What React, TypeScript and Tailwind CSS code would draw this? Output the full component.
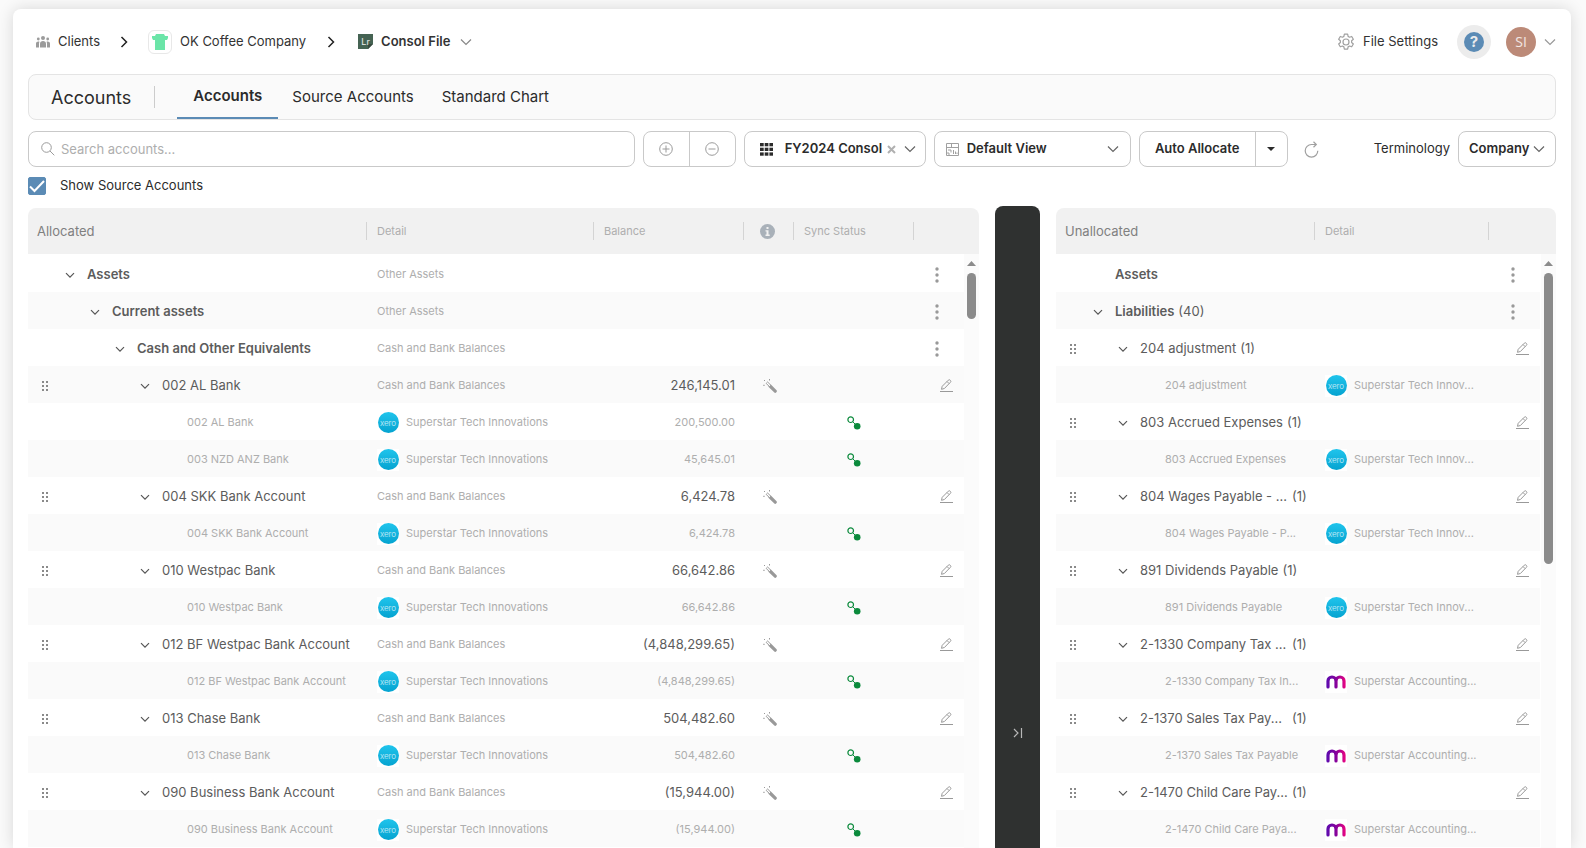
import { useState } from "react";
import type { ReactNode } from "react";

interface IconProps {
  className?: string;
}

function ChevronDown({ className = "" }: IconProps) {
  return (
    <svg viewBox="0 0 12 12" className={`h-3 w-3 shrink-0 ${className}`} fill="none" stroke="currentColor" strokeWidth="1.2">
      <path d="M1 3.5l5 5 5-5" />
    </svg>
  );
}

function RowChevron() {
  return (
    <svg viewBox="0 0 10 10" className="h-[10px] w-[10px]" fill="none" stroke="#555" strokeWidth="1.2">
      <path d="M1 3.2l4 4 4-4" />
    </svg>
  );
}

function BreadcrumbArrow() {
  return (
    <svg viewBox="0 0 8 12" className="h-3 w-2 shrink-0" fill="none" stroke="#222" strokeWidth="1.5">
      <path d="M1.5 1l5 5-5 5" />
    </svg>
  );
}

function ClientsIcon() {
  return (
    <svg viewBox="0 0 14 12" className="h-3 w-[14px]" fill="#9b9b9b">
      <circle cx="7" cy="2" r="2" />
      <circle cx="2.3" cy="3" r="1.4" />
      <circle cx="11.7" cy="3" r="1.4" />
      <path d="M4 11.5V7.6C4 5.9 5.3 5 7 5s3 .9 3 2.6v3.9z" />
      <path d="M0 11.5V7.4c0-1.3 1-2 2.3-2 .5 0 .9.1 1.2.3-.4.6-.5 1.3-.5 2v3.8z" />
      <path d="M14 11.5V7.4c0-1.3-1-2-2.3-2-.5 0-.9.1-1.2.3.4.6.5 1.3.5 2v3.8z" />
    </svg>
  );
}

function ShirtIcon() {
  return (
    <svg viewBox="0 0 16 16" className="h-4 w-4" fill="#6be5a8">
      <path d="M4 0h8l1 2h3v2l-1 2h-2v10H3V6H1L0 4V2h3z" />
    </svg>
  );
}

function FileIcon() {
  return (
    <span className="relative flex h-[15px] w-[15px] items-center justify-center">
      <svg viewBox="0 0 15 15" className="absolute inset-0" fill="#456353">
        <path d="M0 0h15v10l-5 5H0z" />
        <path d="M10 15v-5h5z" fill="#36493f" />
      </svg>
      <span className="relative text-[9px] leading-none font-normal text-white/90">Lr</span>
    </span>
  );
}

function GearIcon() {
  return (
    <svg viewBox="0 0 24 24" className="h-[18px] w-[18px]" fill="none" stroke="#a0a0a0" strokeWidth="1.6" strokeLinejoin="round">
      <circle cx="12" cy="12" r="4" />
      <path d="M9.8 1.5h4.4l.6 3 1.9 1.1 2.9-1 2.2 3.8-2.3 2v2.2l2.3 2-2.2 3.8-2.9-1-1.9 1.1-.6 3H9.8l-.6-3-1.9-1.1-2.900 1-2.200-3.800 2.300-2v-2.200l-2.300-2 2.200-3.800 2.900 1 1.900-1.100z" />
    </svg>
  );
}

function SearchIcon() {
  return (
    <svg viewBox="0 0 14 14" className="h-[14px] w-[14px] shrink-0" fill="none" stroke="#9b9b9b" strokeWidth="1">
      <circle cx="5.5" cy="5.5" r="4.8" />
      <path d="M9 9l4.3 4.3" />
    </svg>
  );
}

function CircleIcon({ plus }: { plus?: boolean }) {
  return (
    <svg viewBox="0 0 14 14" className="h-[14px] w-[14px]" fill="none" stroke="#9b9b9b" strokeWidth="1">
      <circle cx="7" cy="7" r="6.3" />
      <path d={plus ? "M3.5 7h7M7 3.5v7" : "M3.5 7h7"} />
    </svg>
  );
}

function GridIcon() {
  return (
    <svg viewBox="0 0 13 13" className="h-[13px] w-[13px] shrink-0" fill="#2b2b2b">
      {[0, 4.7, 9.4].map((y) => [0, 4.7, 9.4].map((x) => <rect key={`${x}-${y}`} x={x} y={y} width="3.7" height="3.3" />))}
    </svg>
  );
}

function ViewIcon() {
  return (
    <svg viewBox="0 0 13 13" className="h-[13px] w-[13px] shrink-0" fill="none" stroke="#a0a0a0" strokeWidth="1">
      <path d="M.5.5h12v12H.5zM.5 4.5h12M5.500.5v4M2 7h3v2.500M2 9v2h2M7.500 7v4M9.500 8.500V11M11 9.500V11" />
    </svg>
  );
}

function RefreshIcon() {
  return (
    <svg viewBox="0 0 15 17" className="h-[17px] w-[15px]" fill="none" stroke="#a0a0a0" strokeWidth="1.2">
      <path d="M12 3.5H7.5a6.300 6.300 0 1 0 6.300 6.300" />
      <path d="M9.500.8l2.800 2.700-2.800 2.700" />
    </svg>
  );
}

function InfoIcon() {
  return (
    <svg viewBox="0 0 15 15" className="h-[15px] w-[15px]">
      <circle cx="7.5" cy="7.5" r="7.5" fill="#a9b1b9" />
      <path d="M6.5 3h2v2h-2zM5.500 6.200h3v4.300h1.200V12H5.500v-1.500h1V7.600h-1z" fill="#f1f1f1" />
    </svg>
  );
}

function DragHandle() {
  return (
    <svg viewBox="0 0 7 10" className="h-[10px] w-[7px]" fill="#8a8a8a">
      {[0, 4, 8].map((y) => [0, 4].map((x) => <rect key={`${x}-${y}`} x={x} y={y} width="2" height="2" />))}
    </svg>
  );
}

function KebabIcon() {
  return (
    <svg viewBox="0 0 4 16" className="h-4 w-1" fill="#999">
      <circle cx="2" cy="2" r="1.7" />
      <circle cx="2" cy="8" r="1.7" />
      <circle cx="2" cy="14" r="1.7" />
    </svg>
  );
}

function PencilIcon() {
  return (
    <svg viewBox="0 0 13 13" className="h-[13px] w-[13px]" fill="none" stroke="#999" strokeWidth="1" strokeLinejoin="round">
      <path d="M1.500 10.300l.7-3L8.300 1.200a1.300 1.300 0 0 1 1.900 0l.2.2a1.300 1.300 0 0 1 0 1.900L4.400 9.500z" />
      <path d="M7 2.500l2.100 2.100" />
      <path d="M0 12.500h13" />
    </svg>
  );
}

function WandIcon() {
  return (
    <svg viewBox="0 0 14 14" className="h-[14px] w-[14px]" fill="none" stroke="#999">
      <path d="M7 7l5.200 5.200" strokeWidth="3.200" strokeLinecap="round" />
      <path d="M3.200 4.400l1.400-1.400 3.200 3.200-1.400 1.400z" fill="#fff" strokeWidth="1" />
      <path d="M1 1l1 1M6.500 0v1.500M.2 6.300h1.500" strokeWidth="1" />
    </svg>
  );
}

function SyncIcon() {
  return (
    <svg viewBox="0 0 14 14" className="h-[14px] w-[14px]" fill="none" stroke="#0b8a3c">
      <circle cx="3.7" cy="3.7" r="2.8" strokeWidth="1.2" />
      <path d="M5.6 5.6l3 3" strokeWidth="1" />
      <circle cx="10.2" cy="10.3" r="3.3" fill="#0b8a3c" stroke="none" />
    </svg>
  );
}

function XeroLogo() {
  return (
    <span className="flex h-[22px] w-[22px] shrink-0 items-center justify-center bg-white">
      <span className="flex h-[21px] w-[21px] items-center justify-center rounded-full bg-gradient-to-b from-[#1fc4ec] to-[#04a3d0] text-[8px] leading-none font-light text-white/80">
        xero
      </span>
    </span>
  );
}

function MyobLogo() {
  return (
    <span className="flex h-[22px] w-[22px] shrink-0 items-center justify-center bg-white">
      <svg viewBox="0 0 20 14" className="h-[14px] w-5" fill="none">
        <defs>
          <linearGradient id="myob" gradientUnits="userSpaceOnUse" x1="0" y1="0" x2="20" y2="0">
            <stop offset="0" stopColor="#5b0bb0" />
            <stop offset="0.5" stopColor="#84039c" />
            <stop offset="1" stopColor="#f0047f" />
          </linearGradient>
        </defs>
        <path
          d="M2 12V6a4 4 0 0 1 8 0v6M10 12V6a4 4 0 0 1 8 0v6"
          stroke="url(#myob)"
          strokeWidth="3.2"
          strokeLinecap="round"
        />
      </svg>
    </span>
  );
}

type Source = "xero" | "myob";

interface Row {
  level: number;
  name: string;
  count?: number;
  clipped?: boolean;
  detail?: string;
  balance?: string;
  source?: Source;
  leaf?: boolean;
}

const TECH = "Superstar Tech Innovations";
const CASH = "Cash and Bank Balances";

const allocated: Row[] = [
  { level: 0, name: "Assets", detail: "Other Assets" },
  { level: 1, name: "Current assets", detail: "Other Assets" },
  { level: 2, name: "Cash and Other Equivalents", detail: CASH },
  { level: 3, name: "002 AL Bank", detail: CASH, balance: "246,145.01" },
  { level: 4, name: "002 AL Bank", detail: TECH, balance: "200,500.00", source: "xero" },
  { level: 4, name: "003 NZD ANZ Bank", detail: TECH, balance: "45,645.01", source: "xero" },
  { level: 3, name: "004 SKK Bank Account", detail: CASH, balance: "6,424.78" },
  { level: 4, name: "004 SKK Bank Account", detail: TECH, balance: "6,424.78", source: "xero" },
  { level: 3, name: "010 Westpac Bank", detail: CASH, balance: "66,642.86" },
  { level: 4, name: "010 Westpac Bank", detail: TECH, balance: "66,642.86", source: "xero" },
  { level: 3, name: "012 BF Westpac Bank Account", detail: CASH, balance: "(4,848,299.65)" },
  { level: 4, name: "012 BF Westpac Bank Account", detail: TECH, balance: "(4,848,299.65)", source: "xero" },
  { level: 3, name: "013 Chase Bank", detail: CASH, balance: "504,482.60" },
  { level: 4, name: "013 Chase Bank", detail: TECH, balance: "504,482.60", source: "xero" },
  { level: 3, name: "090 Business Bank Account", detail: CASH, balance: "(15,944.00)" },
  { level: 4, name: "090 Business Bank Account", detail: TECH, balance: "(15,944.00)", source: "xero" },
];

const unallocated: Row[] = [
  { level: 0, name: "Assets", leaf: true },
  { level: 0, name: "Liabilities", count: 40 },
  { level: 3, name: "204 adjustment", count: 1 },
  { level: 4, name: "204 adjustment", detail: "Superstar Tech Innov...", source: "xero" },
  { level: 3, name: "803 Accrued Expenses", count: 1 },
  { level: 4, name: "803 Accrued Expenses", detail: "Superstar Tech Innov...", source: "xero" },
  { level: 3, name: "804 Wages Payable - ...", count: 1, clipped: true },
  { level: 4, name: "804 Wages Payable - P...", detail: "Superstar Tech Innov...", source: "xero" },
  { level: 3, name: "891 Dividends Payable", count: 1 },
  { level: 4, name: "891 Dividends Payable", detail: "Superstar Tech Innov...", source: "xero" },
  { level: 3, name: "2-1330 Company Tax ...", count: 1, clipped: true },
  { level: 4, name: "2-1330 Company Tax In...", detail: "Superstar Accounting...", source: "myob" },
  { level: 3, name: "2-1370 Sales Tax Pay...", count: 1, clipped: true },
  { level: 4, name: "2-1370 Sales Tax Payable", detail: "Superstar Accounting...", source: "myob" },
  { level: 3, name: "2-1470 Child Care Pay...", count: 1, clipped: true },
  { level: 4, name: "2-1470 Child Care Paya...", detail: "Superstar Accounting...", source: "myob" },
];

// Indent of the name per tree level
const allocatedIndent = ["pl-[9px]", "pl-[34px]", "pl-[59px]", "pl-[84px]", "pl-[109px]"];
const unallocatedIndent = ["pl-[9px]", "", "", "pl-[34px]", "pl-[59px]"];

function NameCell({ row, indent }: { row: Row; indent: string }) {
  const isSource = row.level === 4;
  return (
    <td className="p-0 pt-[2px]">
      <div className="flex items-center whitespace-nowrap">
        <span className="flex w-6 shrink-0 pl-[14px]">{row.level === 3 && <DragHandle />}</span>
        <div className={`flex items-center ${indent}`}>
          <span className="flex w-[26px] shrink-0 items-center">
            {!isSource && !row.leaf && (
              <button type="button" aria-label={`Collapse ${row.name}`} className="pl-1">
                <RowChevron />
              </button>
            )}
          </span>
          {isSource ? (
            <span className="text-[11px] text-[#aeaeae]">{row.name}</span>
          ) : (
            <>
              <span className={`text-[13px] text-[#5c5c5c] ${row.level < 3 ? "font-semibold" : ""} ${row.clipped ? "w-[148px]" : ""}`}>
                {row.name}
              </span>
              {row.count && <span className="pl-1 text-[13px] text-[#5c5c5c]">({row.count})</span>}
            </>
          )}
        </div>
      </div>
    </td>
  );
}

function DetailCell({ row }: { row: Row }) {
  return (
    <td className="p-0 pt-[2px] pl-[11px]">
      <div className="flex items-center gap-[7px] whitespace-nowrap text-[11px] text-[#aeaeae]">
        {row.source === "xero" && <XeroLogo />}
        {row.source === "myob" && <MyobLogo />}
        {row.detail}
      </div>
    </td>
  );
}

function ActionCell({ row }: { row: Row }) {
  return (
    <td className="p-0 pt-[2px]">
      <div className="flex justify-end pr-[11px]">
        {row.level < 3 && (
          <button type="button" aria-label="More actions" className="mr-[14px]">
            <KebabIcon />
          </button>
        )}
        {row.level === 3 && (
          <button type="button" aria-label={`Edit ${row.name}`}>
            <PencilIcon />
          </button>
        )}
      </div>
    </td>
  );
}

function HeadCell({ children, first }: { children?: ReactNode; first?: boolean }) {
  return (
    <th className="p-0 text-left font-normal">
      <div
        className={
          first
            ? "pt-[2px] pl-[9px] text-[13px] text-[#808080]"
            : "flex h-[18px] items-center border-l border-[#d4d4d4] pl-[10px] text-[11px] whitespace-nowrap text-[#aeaeae]"
        }
      >
        {children}
      </div>
    </th>
  );
}

function ScrollTrack({ thumb }: { thumb: string }) {
  return (
    <div className="flex w-[15px] shrink-0 flex-col items-center bg-[#fbfbfb] pt-[7px]" aria-hidden="true">
      <svg viewBox="0 0 9 5" className="h-[5px] w-[9px]" fill="#8b8b8b">
        <path d="M0 5l4.5-5L9 5z" />
      </svg>
      <div className={`mt-[7px] w-[9px] rounded-full bg-[#8b8b8b] ${thumb}`} />
    </div>
  );
}

function AllocatedPanel() {
  const cols = (
    <colgroup>
      <col />
      <col className="w-[227px]" />
      <col className="w-[150px]" />
      <col className="w-[50px]" />
      <col className="w-[120px]" />
      <col className="w-[51px]" />
    </colgroup>
  );
  return (
    <section className="flex min-w-0 flex-[951] flex-col pt-[3px]">
      <div className="h-[46px] rounded-t-lg bg-[#f1f1f1] pr-[15px]">
        <table className="h-full w-full table-fixed border-collapse">
          {cols}
          <thead>
            <tr>
              <HeadCell first>Allocated</HeadCell>
              <HeadCell>Detail</HeadCell>
              <HeadCell>Balance</HeadCell>
              <HeadCell><span className="pl-[6px]"><InfoIcon /></span></HeadCell>
              <HeadCell>Sync Status</HeadCell>
              <HeadCell />
            </tr>
          </thead>
        </table>
      </div>
      <div className="flex flex-1">
        <div className="min-w-0 flex-1 pt-px">
          <table className="w-full table-fixed border-collapse">
            {cols}
            <tbody>
              {allocated.map((row, i) => (
                <tr key={i} className="h-[37px] even:bg-[#fafafa]">
                  <NameCell row={row} indent={allocatedIndent[row.level]} />
                  <DetailCell row={row} />
                  <td className={`p-0 pt-[2px] pr-2 text-right ${row.source ? "text-[11px] text-[#aeaeae]" : "text-[13px] text-[#5c5c5c]"}`}>
                    {row.balance}
                  </td>
                  <td className="p-0 pt-[2px] pl-5">{row.level === 3 && <WandIcon />}</td>
                  <td className="p-0 pt-[2px] pl-[54px]">{row.source && <SyncIcon />}</td>
                  <ActionCell row={row} />
                </tr>
              ))}
            </tbody>
          </table>
        </div>
        <ScrollTrack thumb="h-[46px]" />
      </div>
    </section>
  );
}

function UnallocatedPanel() {
  const cols = (
    <colgroup>
      <col />
      <col className="w-[174px]" />
      <col className="w-[52px]" />
    </colgroup>
  );
  return (
    <section className="flex min-w-0 flex-[500] flex-col pt-[3px]">
      <div className="h-[46px] rounded-t-lg bg-[#f1f1f1] pr-4">
        <table className="h-full w-full table-fixed border-collapse">
          {cols}
          <thead>
            <tr>
              <HeadCell first>Unallocated</HeadCell>
              <HeadCell>Detail</HeadCell>
              <HeadCell />
            </tr>
          </thead>
        </table>
      </div>
      <div className="flex flex-1">
        <div className="min-w-0 flex-1 pt-px pr-px">
          <table className="w-full table-fixed border-collapse">
            {cols}
            <tbody>
              {unallocated.map((row, i) => (
                <tr key={i} className="h-[37px] even:bg-[#fafafa]">
                  <NameCell row={row} indent={unallocatedIndent[row.level]} />
                  <DetailCell row={row} />
                  <ActionCell row={row} />
                </tr>
              ))}
            </tbody>
          </table>
        </div>
        <ScrollTrack thumb="h-[291px]" />
      </div>
    </section>
  );
}

function Header() {
  return (
    <header className="flex h-[65px] items-center justify-between pl-2 text-[13px] text-[#333]">
      <nav className="flex items-center" aria-label="Breadcrumb">
        <a href="#clients" className="flex items-center gap-2">
          <ClientsIcon />
          Clients
        </a>
        <span className="px-5"><BreadcrumbArrow /></span>
        <a href="#company" className="flex items-center gap-2">
          <span className="flex h-6 w-6 items-center justify-center rounded-md border border-[#e8e8e8]">
            <ShirtIcon />
          </span>
          OK Coffee Company
        </a>
        <span className="pr-[23px] pl-[21px]"><BreadcrumbArrow /></span>
        <button type="button" className="flex items-center gap-2 font-semibold">
          <FileIcon />
          Consol File
          <ChevronDown className="ml-[2px] text-[#888]" />
        </button>
      </nav>
      <div className="flex items-center">
        <a href="#settings" className="flex items-center gap-2">
          <GearIcon />
          File Settings
        </a>
        <button type="button" aria-label="Help" className="ml-[19px] flex h-[34px] w-[34px] items-center justify-center rounded-full bg-[#ececec]">
          <span className="flex h-5 w-5 items-center justify-center rounded-full bg-[#5b8bb5] text-[15px] leading-none font-bold text-[#ececec]">?</span>
        </button>
        <button type="button" className="ml-[15px] flex items-center gap-2">
          <span className="flex h-[30px] w-[30px] items-center justify-center rounded-full bg-[#bc8a78] font-['Open_Sans',sans-serif] text-[14px] text-white/80">SI</span>
          <ChevronDown className="text-[#999]" />
        </button>
      </div>
    </header>
  );
}

function TabBar() {
  return (
    <div className="flex h-[46px] items-center rounded-lg border border-[#e4e4e4] bg-[#fafafa] pl-[22px] text-[#2b2b2b]">
      <h1 className="text-[18px]">Accounts</h1>
      <div className="mr-[22px] ml-[23px] h-[22px] w-px bg-[#ccc]" />
      <nav className="flex h-full text-[15px]" aria-label="Account views">
        <a href="#accounts" className="flex items-center border-b-2 border-[#5b8bb5] px-4 font-semibold">Accounts</a>
        <a href="#source-accounts" className="flex items-center px-[14px]">Source Accounts</a>
        <a href="#standard-chart" className="flex items-center px-[14px]">Standard Chart</a>
      </nav>
    </div>
  );
}

function Toolbar() {
  const [query, setQuery] = useState("");
  return (
    <div className="flex h-9 items-center gap-2 text-[13px] text-[#2b2b2b]">
      <label className="flex h-9 min-w-0 flex-1 items-center gap-[6px] rounded-lg border border-[#c9c9c9] px-3">
        <SearchIcon />
        <input
          type="text"
          aria-label="Search accounts"
          placeholder="Search accounts..."
          value={query}
          onChange={(e) => setQuery(e.target.value)}
          className="min-w-0 flex-1 pt-[2px] outline-none placeholder:text-[#aeaeae]"
        />
      </label>
      <div className="flex h-9 w-[93px] rounded-lg border border-[#c9c9c9]">
        <button type="button" aria-label="Expand all" className="flex flex-1 items-center justify-center border-r border-[#c9c9c9]">
          <CircleIcon plus />
        </button>
        <button type="button" aria-label="Collapse all" className="flex flex-1 items-center justify-center">
          <CircleIcon />
        </button>
      </div>
      <div className="flex h-9 w-[182px] items-center rounded-lg border border-[#c9c9c9] pl-[15px]">
        <GridIcon />
        <button type="button" className="pl-3 font-semibold whitespace-nowrap">FY2024 Consol</button>
        <button type="button" aria-label="Clear" className="pl-[5px] text-[#b0b0b0]">
          <svg viewBox="0 0 9 9" className="h-[9px] w-[9px]" stroke="currentColor" strokeWidth="2">
            <path d="M1 1l7 7M8 1L1 8" />
          </svg>
        </button>
        <ChevronDown className="ml-2 text-[#666]" />
      </div>
      <div className="flex h-9 w-[197px] items-center rounded-lg border border-[#c9c9c9] px-[11px]">
        <ViewIcon />
        <select aria-label="View" className="min-w-0 flex-1 appearance-none pl-2 font-semibold outline-none">
          <option>Default View</option>
        </select>
        <ChevronDown className="text-[#666]" />
      </div>
      <div className="flex h-9 w-[149px] rounded-lg border border-[#c9c9c9]">
        <button type="button" className="flex-1 font-semibold whitespace-nowrap">Auto Allocate</button>
        <button type="button" aria-label="Allocation options" className="flex w-8 items-center justify-center border-l border-[#c9c9c9]">
          <svg viewBox="0 0 8 4" className="h-1 w-2" fill="#2b2b2b">
            <path d="M0 0h8L4 4z" />
          </svg>
        </button>
      </div>
      <button type="button" aria-label="Refresh" className="ml-2">
        <RefreshIcon />
      </button>
      <label htmlFor="terminology" className="ml-[47px]">Terminology</label>
      <div className="flex h-9 w-[98px] items-center rounded-lg border border-[#c9c9c9] pr-[10px] pl-[10px]">
        <select id="terminology" className="min-w-0 flex-1 appearance-none font-semibold outline-none">
          <option>Company</option>
        </select>
        <ChevronDown className="text-[#666]" />
      </div>
    </div>
  );
}

export default function App() {
  const [showSource, setShowSource] = useState(true);
  return (
    <div className="flex min-h-screen flex-col bg-[#fafafa] pt-[9px] pr-[15px] pl-[13px] font-[Inter,sans-serif]">
      <main className="flex flex-1 flex-col rounded-t-lg bg-white px-[15px] shadow-[0_0_16px_rgba(0,0,0,0.14)]">
        <Header />
        <TabBar />
        <div className="mt-[11px]">
          <Toolbar />
        </div>
        <label className="mt-[10px] flex h-[18px] items-center gap-[14px] text-[13px] text-[#2b2b2b]">
          <span className="relative h-[18px] w-[18px]">
            <input
              type="checkbox"
              checked={showSource}
              onChange={(e) => setShowSource(e.target.checked)}
              className="peer block h-[18px] w-[18px] appearance-none rounded-[2px] border border-[#5b8bb5] checked:bg-[#5b8bb5]"
            />
            <svg viewBox="0 0 18 18" className="pointer-events-none absolute inset-0 hidden peer-checked:block" fill="none" stroke="#fff" strokeWidth="2">
              <path d="M2 9.5l4.5 4.5L16 4" />
            </svg>
          </span>
          Show Source Accounts
        </label>
        <div className="mt-[10px] flex flex-1">
          <AllocatedPanel />
          <div className="mx-4 mt-px flex w-[45px] shrink-0 justify-center rounded-t-lg bg-[#2f3130]">
            <button type="button" aria-label="Collapse panel" className="mb-[109px] self-end text-[#b8b8b8]">
              <svg viewBox="0 0 10 12" className="h-3 w-[10px]" fill="none" stroke="currentColor" strokeWidth="1.2">
                <path d="M1 2l4 4-4 4M8.5 1v10" />
              </svg>
            </button>
          </div>
          <UnallocatedPanel />
        </div>
      </main>
    </div>
  );
}
